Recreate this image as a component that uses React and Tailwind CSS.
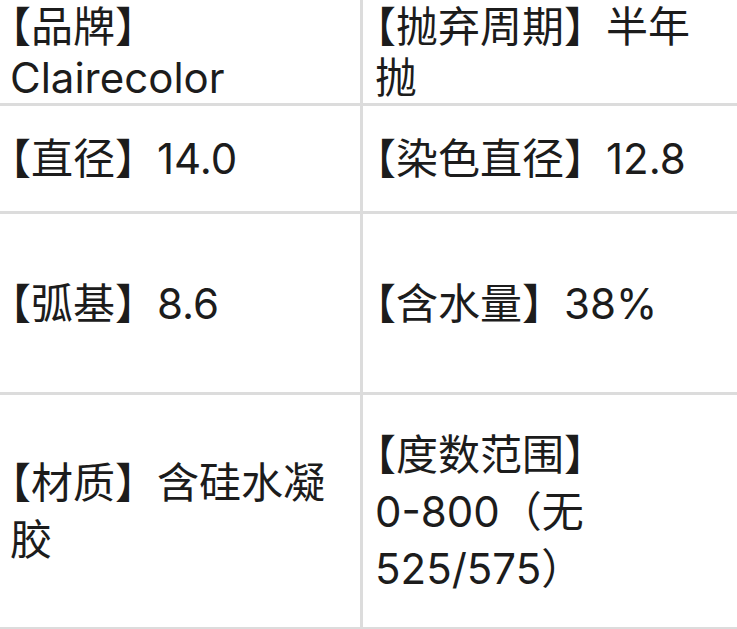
import React from 'react';

// Spec table: two columns, grey hairlines made by the grid gap
const Open = () => <span className="[font-feature-settings:'halt']">【</span>;

const Cell = ({ right, tight, children }) => (
  <div className={`bg-white flex items-center ${right ? 'pl-[12px]' : 'pl-[10px]'}`}>
    <p className={tight ? 'leading-[51px]' : 'leading-[57px]'}>{children}</p>
  </div>
);

export default function App() {
  return (
    <div
      className="w-[737px] h-[629px] overflow-hidden bg-white text-[42px] text-[#1c1c1c]"
      style={{ fontFamily: '"Inter", "Noto Sans CJK SC", sans-serif' }}
    >
      <div className="grid grid-cols-[360px_374px] grid-rows-[103px_105px_178px_232px] gap-[3px] pb-[3px] bg-[#dcdcdc]">
        <Cell tight>
          <Open />品牌】<br />Clairecolor
        </Cell>
        <Cell right tight>
          <Open />抛弃周期】半年<br />抛
        </Cell>

        <Cell>
          <Open />直径】14.0
        </Cell>
        <Cell right>
          <Open />染色直径】12.8
        </Cell>

        <Cell>
          <Open />弧基】8.6
        </Cell>
        <Cell right>
          <Open />含水量】38%
        </Cell>

        <Cell>
          <Open />材质】含硅水凝<br />胶
        </Cell>
        <Cell right>
          <Open />度数范围】<br />0-800（无<br />525/575）
        </Cell>
      </div>
    </div>
  );
}
